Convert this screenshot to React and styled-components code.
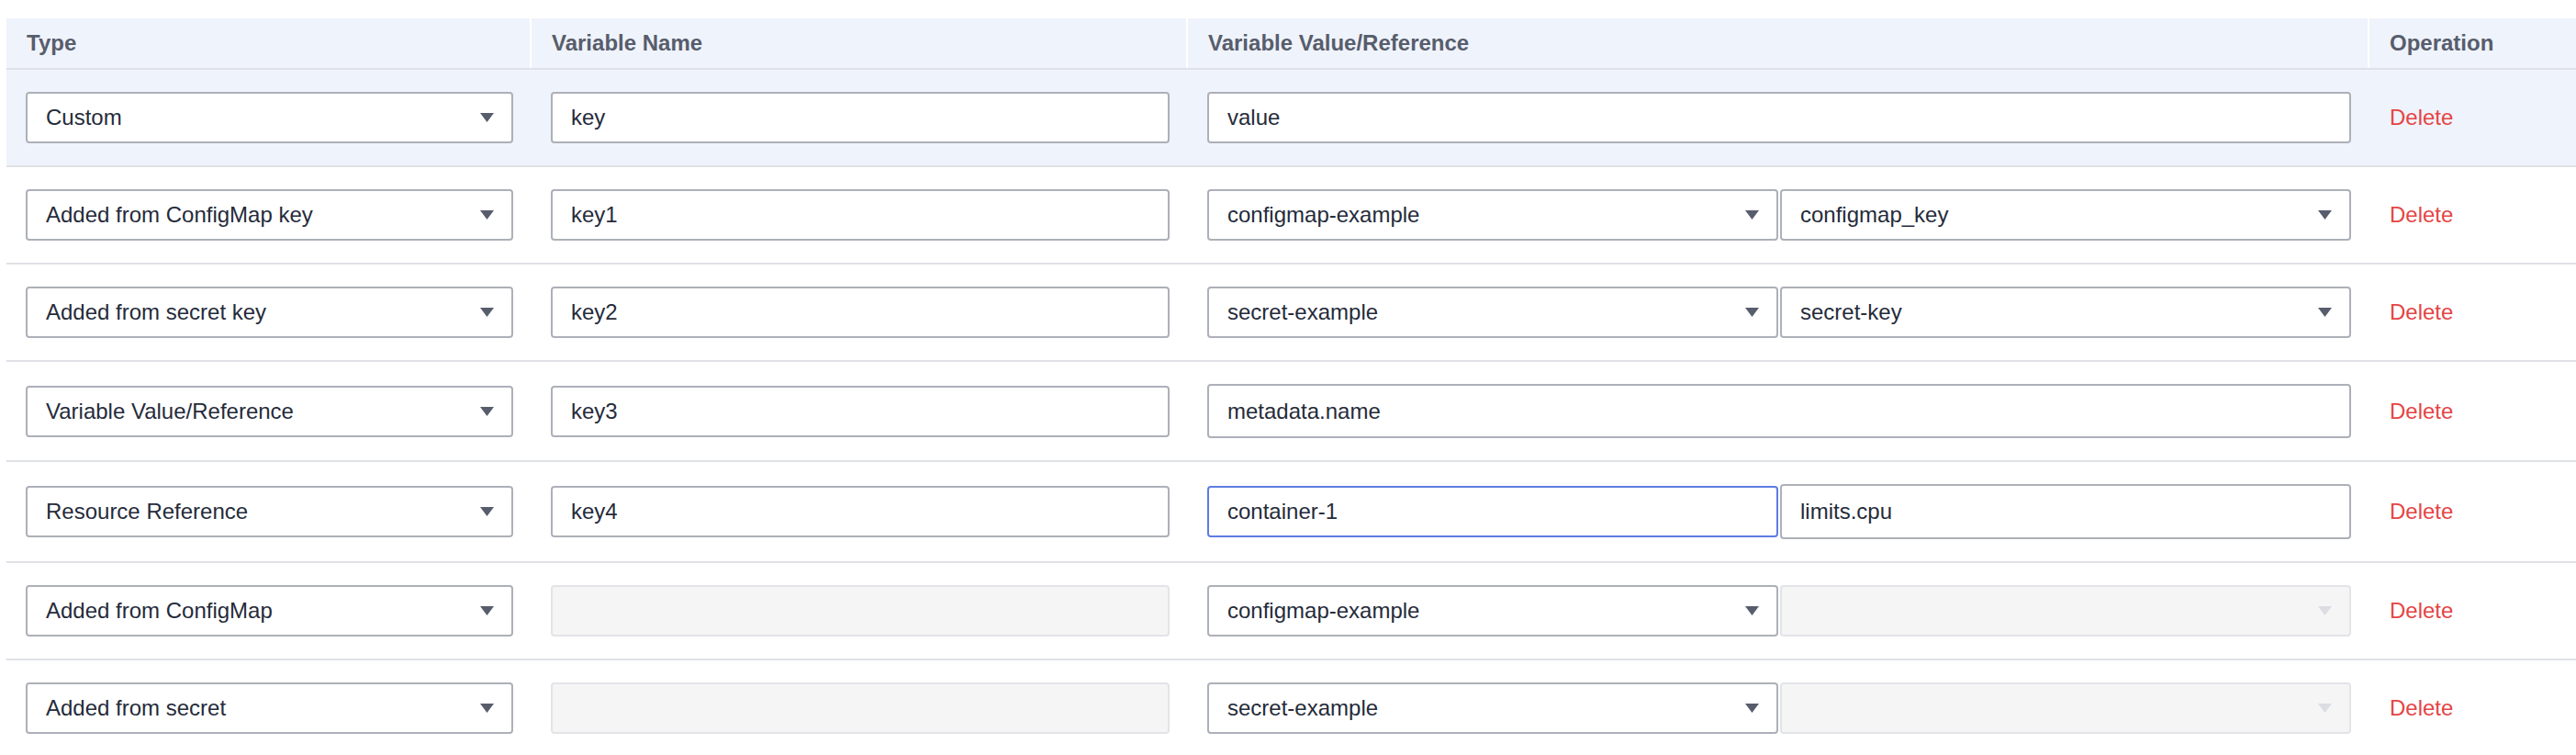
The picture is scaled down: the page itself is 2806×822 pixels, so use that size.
import React from 'react'
import styled, { createGlobalStyle } from 'styled-components'

const GlobalStyle = createGlobalStyle`
  * { box-sizing: border-box; }
  body {
    margin: 0;
    background: #fff;
    font-family: "Liberation Sans", Arial, sans-serif;
  }
`

const columns = `grid-template-columns: 572px 715px 1287px 1fr;`

const Page = styled.div`
  padding: 20px 0 0 7px;
`

const Table = styled.div`
  display: flex;
  flex-direction: column;
`

const HeadRow = styled.div`
  display: grid;
  ${columns}
  height: 56px;
  background: #eff3fb;
  border-bottom: 2px solid #dfe1e6;
`

const HeadCell = styled.div`
  display: flex;
  align-items: center;
  padding-left: 22px;
  font-size: 24px;
  font-weight: 700;
  color: #575d6c;
  border-right: ${({ last }) => (last ? 'none' : '2px solid #fff')};
`

const Row = styled.div`
  display: grid;
  ${columns}
  background: ${({ active }) => (active ? '#eff3fb' : '#fff')};
  border-bottom: 2px solid #dfe1e6;
`

const Cell = styled.div`
  display: flex;
  align-items: center;
  padding: 24px 20px 24px 21px;
`

const Pair = styled.div`
  display: flex;
  gap: 2px;
  width: 100%;
  align-items: center;
`

const Field = styled.input`
  width: 100%;
  height: ${({ h }) => h || 56}px;
  padding: 0 20px;
  border: 2px solid ${({ focused }) => (focused ? '#5e7ce0' : '#adb0b8')};
  border-radius: 4px;
  background: #fff;
  font-family: "Liberation Sans", Arial, sans-serif;
  font-size: 24px;
  color: #252b3a;
  outline: none;

  &:disabled {
    background: #f5f5f6;
    border-color: #e3e4e8;
  }
`

const SelectBox = styled.div`
  flex: 1;
  width: 100%;
  height: 56px;
  display: flex;
  align-items: center;
  justify-content: space-between;
  padding: 0 19px 0 20px;
  border: 2px solid ${({ disabled }) => (disabled ? '#e3e4e8' : '#adb0b8')};
  border-radius: 4px;
  background: ${({ disabled }) => (disabled ? '#f5f5f6' : '#fff')};
  font-size: 24px;
  color: #252b3a;
  white-space: nowrap;
`

const Arrow = styled.svg`
  width: 15px;
  height: 10px;
  flex: none;
  fill: ${({ disabled }) => (disabled ? '#dcdde2' : '#575d6c')};
`

const DeleteLink = styled.span`
  padding-left: 1px;
  font-size: 24px;
  color: #e54545;
  cursor: pointer;
`

const Select = ({ value, disabled }) => (
  <SelectBox disabled={disabled}>
    <span>{value}</span>
    <Arrow disabled={disabled} viewBox="0 0 15 10">
      <polygon points="0,0 15,0 7.5,10" />
    </Arrow>
  </SelectBox>
)

const rows = [
  { type: 'Custom', name: 'key', value: { input: 'value' }, active: true },
  { type: 'Added from ConfigMap key', name: 'key1', value: { selects: ['configmap-example', 'configmap_key'] } },
  { type: 'Added from secret key', name: 'key2', value: { selects: ['secret-example', 'secret-key'] } },
  { type: 'Variable Value/Reference', name: 'key3', value: { input: 'metadata.name', h: 59 } },
  { type: 'Resource Reference', name: 'key4', value: { inputs: ['container-1', 'limits.cpu'] } },
  { type: 'Added from ConfigMap', name: null, value: { selects: ['configmap-example', null] } },
  { type: 'Added from secret', name: null, value: { selects: ['secret-example', null] } },
]

const ValueCell = ({ value }) => {
  if (value.input) return <Field h={value.h} defaultValue={value.input} readOnly />
  if (value.inputs)
    return (
      <Pair>
        <Field focused defaultValue={value.inputs[0]} readOnly />
        <Field h={60} defaultValue={value.inputs[1]} readOnly />
      </Pair>
    )
  return (
    <Pair>
      <Select value={value.selects[0]} />
      <Select value={value.selects[1] || ''} disabled={!value.selects[1]} />
    </Pair>
  )
}

const App = () => {
  return (
    <Page>
      <GlobalStyle />
      <Table>
        <HeadRow>
          <HeadCell>Type</HeadCell>
          <HeadCell>Variable Name</HeadCell>
          <HeadCell>Variable Value/Reference</HeadCell>
          <HeadCell last>Operation</HeadCell>
        </HeadRow>
        {rows.map((r, i) => (
          <Row key={i} active={r.active}>
            <Cell>
              <Select value={r.type} />
            </Cell>
            <Cell>
              {r.name ? <Field defaultValue={r.name} readOnly /> : <Field disabled />}
            </Cell>
            <Cell>
              <ValueCell value={r.value} />
            </Cell>
            <Cell>
              <DeleteLink>Delete</DeleteLink>
            </Cell>
          </Row>
        ))}
      </Table>
    </Page>
  )
}

export default App
